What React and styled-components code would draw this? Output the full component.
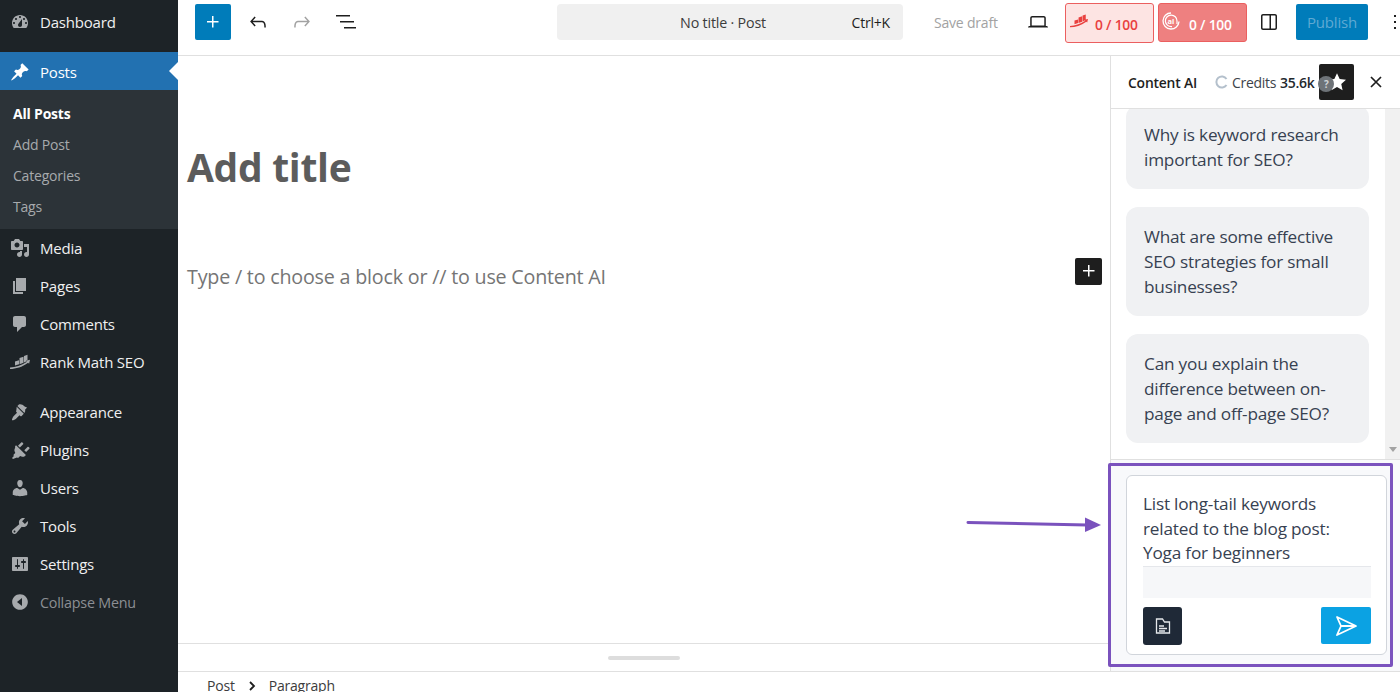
import React from 'react';
import styled, { createGlobalStyle } from 'styled-components';

const GlobalStyle = createGlobalStyle`
	html, body {
		margin: 0;
		padding: 0;
		height: 100%;
		overflow: hidden;
		background: #fff;
	}
	* {
		box-sizing: border-box;
	}
	body {
		font-family: 'Open Sans', 'Noto Sans', sans-serif;
		color: #1e1e1e;
	}
`;

const Page = styled.div`
	display: flex;
	height: 692px;
	width: 1400px;
	position: relative;
	overflow: hidden;
`;

// ######### admin sidebar
const Sidebar = styled.nav`
	width: 178px;
	flex-shrink: 0;
	background: #1d2327;
	padding-top: 3px;
	display: flex;
	flex-direction: column;
`;

const MenuItem = styled.div`
	height: 38px;
	display: flex;
	align-items: center;
	gap: 10px;
	padding-left: 10px;
	font-size: ${(p) => (p.$muted ? 14.3 : 15)}px;
	letter-spacing: -0.2px;
	position: relative;
	flex-shrink: 0;
	color: ${(p) => (p.$muted ? '#8c8f94' : '#f0f0f1')};
	background: ${(p) => (p.$active ? '#2271b1' : 'transparent')};
	margin-top: ${(p) => p.$gap || 0}px;
	padding-top: ${(p) => (p.$active ? 1 : 0)}px;
	svg {
		width: 20px;
		height: 20px;
		flex-shrink: 0;
		fill: ${(p) => (p.$active ? '#fff' : '#a7aaad')};
	}
	${(p) =>
		p.$active &&
		`
		color: #fff;
		&::after {
			content: '';
			position: absolute;
			right: 0;
			top: 10px;
			border: 9px solid transparent;
			border-right-color: #fff;
			border-left-width: 0;
		}
	`}
`;

const SubMenu = styled.div`
	background: #2c3338;
	padding: 8px 0 7px;
	height: 139px;
	flex-shrink: 0;
`;

const SubItem = styled.div`
	height: 31px;
	display: flex;
	align-items: center;
	padding-left: 13px;
	font-size: 14px;
	letter-spacing: -0.2px;
	font-weight: ${(p) => (p.$current ? 700 : 400)};
	color: ${(p) => (p.$current ? '#fff' : '#a7aaad')};
`;

// ######### editor
const Main = styled.div`
	flex: 1;
	min-width: 0;
	display: flex;
	flex-direction: column;
`;

const TopBar = styled.header`
	height: 56px;
	flex-shrink: 0;
	border-bottom: 1px solid #e0e0e0;
	display: flex;
	align-items: center;
	padding: 0 0 11px 17px;
`;

const InserterButton = styled.button`
	width: 36px;
	height: 36px;
	flex-shrink: 0;
	border: 0;
	border-radius: 2px;
	background: #007cba;
	display: flex;
	align-items: center;
	justify-content: center;
	padding: 0;
	svg {
		fill: #fff;
	}
`;

const ToolIcon = styled.span`
	display: flex;
	align-items: center;
	justify-content: center;
	width: 24px;
	height: 24px;
	margin-left: ${(p) => p.$left || 0}px;
	flex-shrink: 0;
	svg {
		fill: ${(p) => (p.$disabled ? '#a2a2a2' : '#1e1e1e')};
	}
`;

const CommandCenter = styled.div`
	width: 346px;
	height: 36px;
	margin-left: 198px;
	background: #f0f0f0;
	border-radius: 4px;
	display: flex;
	align-items: center;
	position: relative;
	padding-right: 13px;
	justify-content: flex-end;
	font-size: 14px;
	letter-spacing: -0.2px;
	flex-shrink: 0;
`;

const CommandTitle = styled.span`
	position: absolute;
	left: 0;
	right: 14px;
	text-align: center;
	font-size: 14.3px;
	color: #3c3c3c;
`;

const Shortcut = styled.span`
	position: relative;
`;

const SaveDraft = styled.span`
	margin-left: 31px;
	font-size: 14px;
	letter-spacing: -0.2px;
	color: #a2a2a2;
	white-space: nowrap;
	width: 64px;
	flex-shrink: 0;
`;

const ScoreBadge = styled.div`
	width: 89px;
	height: ${(p) => (p.$strong ? 39 : 40)}px;
	margin: 1px 0 0 ${(p) => p.$left}px;
	border-radius: 3px;
	border: 1px solid #eb5f5f;
	background: ${(p) => (p.$strong ? '#ee8080' : '#fde4e3')};
	color: ${(p) => (p.$strong ? '#fff' : '#e9403f')};
	display: flex;
	align-items: center;
	padding-left: ${(p) => (p.$strong ? 3 : 4)}px;
	gap: ${(p) => (p.$strong ? 9 : 7)}px;
	font-size: 13.8px;
	font-weight: 600;
	flex-shrink: 0;
	svg {
		flex-shrink: 0;
		margin-top: -3px;
	}
`;

const ScoreText = styled.span`
	margin-top: 3px;
	letter-spacing: -0.2px;
`;

const PublishButton = styled.button`
	width: 72px;
	height: 36px;
	margin-left: 15px;
	border: 0;
	padding: 0;
	border-radius: 2px;
	background: #007cba;
	color: #5fa9d3;
	font-family: inherit;
	font-size: 15px;
	letter-spacing: -0.2px;
	flex-shrink: 0;
`;

const Workspace = styled.div`
	flex: 1;
	min-height: 0;
	display: flex;
`;

const EditorColumn = styled.div`
	flex: 1;
	min-width: 0;
	display: flex;
	flex-direction: column;
`;

const Canvas = styled.div`
	flex: 1;
	padding: 85px 8px 0 9px;
	border-bottom: 1px solid #e0e0e0;
`;

const TitleField = styled.h1`
	margin: 0;
	font-size: 39px;
	line-height: 52px;
	font-weight: 700;
	letter-spacing: -0.3px;
	color: #5c5c5c;
`;

const BlockRow = styled.div`
	margin-top: 70px;
	height: 28px;
	display: flex;
	align-items: center;
	justify-content: space-between;
`;

const Placeholder = styled.span`
	font-size: 19.7px;
	letter-spacing: -0.2px;
	line-height: 24px;
	margin-top: -1px;
	color: #757575;
`;

const BlockAdd = styled.span`
	width: 27px;
	height: 27px;
	margin-top: -12px;
	border-radius: 2px;
	background: #1e1e1e;
	display: flex;
	align-items: center;
	justify-content: center;
	svg {
		fill: #fff;
	}
`;

const ResizeBar = styled.div`
	height: 27px;
	flex-shrink: 0;
	display: flex;
	align-items: center;
	justify-content: center;
`;

const ResizeHandle = styled.span`
	width: 72px;
	height: 4px;
	border-radius: 2px;
	background: #ddd;
`;

const Breadcrumb = styled.footer`
	height: 21px;
	flex-shrink: 0;
	border-top: 1px solid #e0e0e0;
	display: flex;
	align-items: center;
	gap: 11px;
	padding: 7px 0 0 29px;
	font-size: 14px;
	letter-spacing: -0.2px;
	color: #3c3c3c;
	line-height: 14px;
`;

// ######### content ai panel
const Panel = styled.aside`
	width: 290px;
	flex-shrink: 0;
	border-left: 1px solid #e0e0e0;
	display: flex;
	flex-direction: column;
`;

const PanelHeader = styled.div`
	height: 53px;
	flex-shrink: 0;
	border-bottom: 1px solid #e0e0e0;
	display: flex;
	align-items: center;
	padding-left: 17px;
`;

const PanelTitle = styled.span`
	font-size: 13.9px;
	font-weight: 600;
	letter-spacing: -0.2px;
	width: 87px;
	white-space: nowrap;
`;

const Credits = styled.span`
	display: flex;
	align-items: center;
	gap: 3px;
	font-size: 14px;
	letter-spacing: -0.3px;
	white-space: nowrap;
	color: #3c434a;
	b {
		font-weight: 600;
		color: #23282d;
		margin-left: 1px;
	}
`;

const StarButton = styled.span`
	width: 35px;
	height: 36px;
	margin-left: 5px;
	background: #1e1e1e;
	border-radius: 2px;
	display: flex;
	align-items: center;
	justify-content: center;
	position: relative;
	flex-shrink: 0;
`;

const HelpDot = styled.span`
	position: absolute;
	left: -1px;
	top: 12px;
	width: 16px;
	height: 16px;
	border-radius: 50%;
	background: #6e7378;
	color: #cfd2d6;
	font-size: 10px;
	font-weight: 700;
	display: flex;
	align-items: center;
	justify-content: center;
`;

const CloseIcon = styled.span`
	margin-left: 15px;
	display: flex;
`;

const Messages = styled.div`
	flex: 1;
	min-height: 0;
	overflow: hidden;
	display: flex;
	border-bottom: 1px solid #e0e0e0;
`;

const MessageList = styled.div`
	flex: 1;
	padding: 0 16px 0 15px;
	margin-top: -4px;
	display: flex;
	flex-direction: column;
	gap: 17.75px;
`;

const Bubble = styled.div`
	background: #f0f1f3;
	border-radius: 12px;
	padding: 17px 18px;
	font-size: 17.2px;
	line-height: 25px;
	letter-spacing: -0.2px;
	color: #374151;
`;

const ScrollTrack = styled.div`
	width: 15px;
	background: #f1f1f1;
	display: flex;
	align-items: flex-end;
	justify-content: center;
	padding-bottom: 7px;
	&::after {
		content: '';
		border: 4px solid transparent;
		border-top: 5px solid #a3a3a3;
		border-bottom-width: 0;
	}
`;

const Composer = styled.div`
	height: 211px;
	flex-shrink: 0;
	background: #f8f9fb;
	padding: 15px 13px 16px 15px;
`;

const ComposerCard = styled.div`
	height: 180px;
	background: #fff;
	border: 1px solid #d1d5db;
	border-radius: 6px;
	padding: 16px 15px 0 16px;
	display: flex;
	flex-direction: column;
`;

const PromptText = styled.div`
	font-size: 17.2px;
	line-height: 24.6px;
	letter-spacing: -0.2px;
	color: #374151;
	height: 74px;
`;

const PromptStrip = styled.div`
	height: 32px;
	background: #f6f7f9;
	border-top: 1px solid #e5e7eb;
`;

const ComposerActions = styled.div`
	margin-top: 9px;
	display: flex;
	justify-content: space-between;
	align-items: flex-start;
`;

const DocButton = styled.span`
	width: 39px;
	height: 38px;
	border-radius: 3px;
	background: #1f2937;
	display: flex;
	align-items: center;
	justify-content: center;
`;

const SendButton = styled.span`
	width: 50px;
	height: 37px;
	border-radius: 2px;
	background: #0ba2e3;
	display: flex;
	align-items: center;
	justify-content: center;
`;

// the purple marks lie over the screenshot
const HighlightBox = styled.div`
	position: absolute;
	left: 1108px;
	top: 463px;
	width: 285px;
	height: 204px;
	border: 3px solid #7a52bd;
	border-radius: 2px;
	pointer-events: none;
`;

const ArrowMark = styled.svg`
	position: absolute;
	left: 965px;
	top: 512px;
`;

const Icon = ({ d, size = 20, box = 20 }) => (
	<svg width={size} height={size} viewBox={`0 0 ${box} ${box}`} fillRule="evenodd">
		<path d={d} />
	</svg>
);

const icons = {
	dashboard:
		'M3.76 16h12.48c1.1-1.37 1.76-3.11 1.76-5 0-4.42-3.58-8-8-8s-8 3.58-8 8c0 1.89.66 3.63 1.76 5zM10 4c.55 0 1 .45 1 1s-.45 1-1 1-1-.45-1-1 .45-1 1-1zM6 6c.55 0 1 .45 1 1s-.45 1-1 1-1-.45-1-1 .45-1 1-1zm8 0c.55 0 1 .45 1 1s-.45 1-1 1-1-.45-1-1 .45-1 1-1zm-5.37 5.55L12 7v6c0 1.1-.9 2-2 2s-2-.9-2-2c0-.57.24-1.08.63-1.45zM4 10c.55 0 1 .45 1 1s-.45 1-1 1-1-.45-1-1 .45-1 1-1zm12 0c.55 0 1 .45 1 1s-.45 1-1 1-1-.45-1-1 .45-1 1-1z',
	post: 'M10.44 3.02l1.82-1.82 6.36 6.35-1.83 1.82c-1.05-.68-2.48-.57-3.41.36l-.75.75c-.92.93-1.04 2.35-.35 3.41l-1.83 1.82-2.41-2.41-2.8 2.79c-.42.42-3.38 2.71-3.8 2.29s1.86-3.39 2.28-3.81l2.79-2.79L4.1 9.36l1.83-1.82c1.05.69 2.48.57 3.4-.36l.75-.75c.93-.92 1.05-2.35.36-3.41z',
	media:
		'M13 11V4c0-.55-.45-1-1-1h-1.67L9 1H5L3.67 3H2c-.55 0-1 .45-1 1v7c0 .55.45 1 1 1h10c.55 0 1-.45 1-1zM7 4.5c1.38 0 2.5 1.12 2.5 2.5S8.38 9.5 7 9.5 4.5 8.38 4.5 7 5.62 4.5 7 4.5zM14 6h5v10.5c0 1.38-1.12 2.5-2.5 2.5S14 17.88 14 16.5s1.12-2.5 2.5-2.5c.17 0 .34.02.5.05V9h-3V6zm-4 8.05V13h2v3.5c0 1.38-1.12 2.5-2.5 2.5S7 17.88 7 16.5 8.12 14 9.5 14c.17 0 .34.02.5.05z',
	pages: 'M6 15V2h10v13H6zm-1 1h8v2H3V5h2v11z',
	comments: 'M5 2h9c1.1 0 2 .9 2 2v7c0 1.1-.9 2-2 2h-2l-5 5v-5H5c-1.1 0-2-.9-2-2V4c0-1.1.9-2 2-2z',
	rankmath:
		'M5 9.500l4-1.300v4l-4 1.300zM9.500 6l4-1.300v6l-4 1.500zM14 4l3.500-1.200v6l-3.500 1.800zM0 15.500c5.500-.3 11-1.800 17-5.700l-1-1.100 4-.9-.9 4-1-1.100c-6 4.500-12 6-18.100 6.300z',
	appearance:
		'M14.48 11.06L7.41 3.99l1.5-1.5c.5-.56 2.3-.47 3.51.32 1.21.8 1.43 1.28 2.66 2.01 1.22.73 2.08.66 2.08.66l-1.69 1.7c-.4.4-.6 1.17-.1 1.68zM6.7 4.7l7.07 7.07-2.12 2.12c-.39.39-1.02.39-1.41 0l-.71-.71-3.5 3.5c-.5.5-3.5 2-4 1.5s1-3.5 1.5-4l3.5-3.5-.71-.71c-.39-.39-.39-1.02 0-1.41z',
	plugins:
		'M13.11 4.36L9.87 7.6 8 5.73l3.24-3.24c.35-.34 1.05-.2 1.56.32.52.51.66 1.21.31 1.55zm-8 1.77l.91-.91 9.88 9.88-.91.91c-.88.88-2.4 1.1-3.5.6l-1.4-.6-1.4 1.4c-.5.5-1.3.5-1.8 0L3 19l-1-1 1.900-1.900c-.5-.5-.5-1.300 0-1.800l1.400-1.400-.6-1.400c-.5-1.100-.28-2.620.41-3.570zM17.500 6.900l-3.240 3.240 1.870 1.870 3.240-3.240c.34-.35.2-1.050-.32-1.560-.51-.52-1.210-.66-1.550-.31z',
	users:
		'M10 9.25c-2.27 0-2.73-3.44-2.73-3.44C7 4.02 7.82 2 9.97 2c2.16 0 2.98 2.02 2.71 3.81 0 0-.41 3.44-2.68 3.44zm0 2.57L12.72 10c2.39 0 4.52 2.33 4.52 4.53v2.49s-3.65 1.13-7.24 1.13c-3.65 0-7.24-1.13-7.24-1.13v-2.49c0-2.25 1.94-4.48 4.47-4.48z',
	tools:
		'M16.68 9.77c-1.34 1.34-3.3 1.67-4.95.99l-5.41 6.52c-.99.99-2.59.99-3.58 0s-.99-2.59 0-3.57l6.52-5.42c-.68-1.65-.35-3.61.99-4.95 1.28-1.28 3.12-1.62 4.72-1.06l-2.89 2.89 2.82 2.82 2.86-2.87c.53 1.58.18 3.4-1.08 4.65zM3.81 16.21c.4.39 1.03.39 1.42 0 .4-.4.4-1.03 0-1.43-.39-.39-1.02-.39-1.42 0-.39.4-.39 1.03 0 1.43z',
	settings:
		'M18 16V4c0-.55-.45-1-1-1H3c-.55 0-1 .45-1 1v12c0 .55.45 1 1 1h14c.55 0 1-.45 1-1zM8 11h1c.55 0 1 .45 1 1s-.45 1-1 1H8v1.5c0 .28-.22.5-.5.5s-.5-.22-.5-.5V13H6c-.55 0-1-.45-1-1s.45-1 1-1h1V5.500c0-.28.22-.5.5-.5s.5.22.5.5V11zm5-2h-1c-.55 0-1-.45-1-1s.45-1 1-1h1V5.500c0-.28.22-.5.5-.5s.5.22.5.5V7h1c.55 0 1 .45 1 1s-.45 1-1 1h-1v5.500c0 .28-.22.5-.5.5s-.5-.22-.5-.5V9z',
	collapse: 'M10 2.16c4.33 0 7.84 3.51 7.84 7.84s-3.51 7.84-7.84 7.84S2.16 14.33 2.16 10 5.67 2.16 10 2.16zM12 14V6l-5 4z',
	plus: 'M11 12.500V17.500H12.500V12.500H17.500V11H12.500V6H11V11H6V12.500H11Z',
	undo: 'M18.3 11.7c-.6-.6-1.4-.9-2.3-.9H6.700l3-3.300-1.100-1-4.500 5 4.500 5 1.100-1-3-3.300H16c.5 0 .9.200 1.300.500 1 1 1 3.400 1 4.500v.3h1.500v-.2c0-1.500 0-4.300-1.500-5.600z',
	redo: 'M5.700 11.700c.6-.6 1.400-.9 2.300-.9h9.300l-3-3.300 1.100-1 4.500 5-4.500 5-1.100-1 3-3.300H8c-.5 0-.9.200-1.300.500-1 1-1 3.400-1 4.500v.3H4.200v-.2c0-1.500 0-4.300 1.500-5.600z',
	listView: 'M1 5h14v1.600H1V5zm4 6h14v1.600H5V11zm4 6h12v1.600H9V17z',
	laptop: 'M20.500 16h-.7V8c0-1.100-.9-2-2-2H6.200c-1.100 0-2 .9-2 2v8h-.7c-.8 0-1.500.7-1.500 1.500h20c0-.8-.7-1.500-1.500-1.500zM5.700 8c0-.3.2-.5.5-.5h11.600c.3 0 .5.200.5.500v7.600H5.700V8z',
	sidebar:
		'M18 4H6c-1.100 0-2 .9-2 2v12c0 1.100.9 2 2 2h12c1.100 0 2-.9 2-2V6c0-1.100-.9-2-2-2zM6 5.500h6.500v13H6c-.3 0-.5-.2-.5-.5V6c0-.3.2-.5.5-.5zm12.500 12.500c0 .3-.2.500-.5.500h-4v-13h4c.3 0 .5.200.5.500v12z',
	dots: 'M13 19h-2v-2h2v2zm0-6h-2v-2h2v2zm0-6h-2V5h2v2z',
};

const menuTop = [
	['media', 'Media'],
	['pages', 'Pages'],
	['comments', 'Comments'],
	['rankmath', 'Rank Math SEO'],
];

const menuBottom = [
	['plugins', 'Plugins'],
	['users', 'Users'],
	['tools', 'Tools'],
	['settings', 'Settings'],
];

const AiLogo = () => (
	<svg width="18" height="18" viewBox="0 0 18 18" fill="none" stroke="#fff">
		<path d="M9 1a8 8 0 1 0 8 8.500" strokeWidth="1.300" />
		<path d="M10 14.600a5.800 5.800 0 1 1 5-5.600v3" strokeWidth="1.200" />
		<text x="9" y="11.500" textAnchor="middle" fontSize="7.500" fontWeight="700" fill="#fff" stroke="none" fontFamily="Open Sans">
			ai
		</text>
	</svg>
);

export default function App() {
	return (
		<Page>
			<GlobalStyle />
			<Sidebar>
				<MenuItem>
					<Icon d={icons.dashboard} />
					Dashboard
				</MenuItem>
				<MenuItem $active $gap={11}>
					<Icon d={icons.post} />
					Posts
				</MenuItem>
				<SubMenu>
					<SubItem $current>All Posts</SubItem>
					<SubItem>Add Post</SubItem>
					<SubItem>Categories</SubItem>
					<SubItem>Tags</SubItem>
				</SubMenu>
				{menuTop.map(([icon, label]) => (
					<MenuItem key={label}>
						<Icon d={icons[icon]} />
						{label}
					</MenuItem>
				))}
				<MenuItem $gap={12}>
					<Icon d={icons.appearance} />
					Appearance
				</MenuItem>
				{menuBottom.map(([icon, label]) => (
					<MenuItem key={label}>
						<Icon d={icons[icon]} />
						{label}
					</MenuItem>
				))}
				<MenuItem $muted>
					<Icon d={icons.collapse} />
					Collapse Menu
				</MenuItem>
			</Sidebar>

			<Main>
				<TopBar>
					<InserterButton aria-label="Add block">
						<Icon d={icons.plus} size={24} box={24} />
					</InserterButton>
					<ToolIcon $left={15}>
						<Icon d={icons.undo} size={24} box={24} />
					</ToolIcon>
					<ToolIcon $left={20} $disabled>
						<Icon d={icons.redo} size={24} box={24} />
					</ToolIcon>
					<ToolIcon $left={21}>
						<Icon d={icons.listView} size={24} box={24} />
					</ToolIcon>
					<CommandCenter>
						<CommandTitle>No title · Post</CommandTitle>
						<Shortcut>Ctrl+K</Shortcut>
					</CommandCenter>
					<SaveDraft>Save draft</SaveDraft>
					<ToolIcon $left={28}>
						<Icon d={icons.laptop} size={24} box={24} />
					</ToolIcon>
					<ScoreBadge $left={15}>
						<svg width="18" height="18" viewBox="0 0 20 20" fill="#e9403f">
							<path d={icons.rankmath} />
						</svg>
						<ScoreText>0 / 100</ScoreText>
					</ScoreBadge>
					<ScoreBadge $left={4} $strong>
						<AiLogo />
						<ScoreText>0 / 100</ScoreText>
					</ScoreBadge>
					<ToolIcon $left={10}>
						<Icon d={icons.sidebar} size={24} box={24} />
					</ToolIcon>
					<PublishButton>Publish</PublishButton>
					<ToolIcon $left={15}>
						<Icon d={icons.dots} size={24} box={24} />
					</ToolIcon>
				</TopBar>

				<Workspace>
					<EditorColumn>
						<Canvas>
							<TitleField>Add title</TitleField>
							<BlockRow>
								<Placeholder>Type / to choose a block or // to use Content AI</Placeholder>
								<BlockAdd>
									<Icon d={icons.plus} size={24} box={24} />
								</BlockAdd>
							</BlockRow>
						</Canvas>
						<ResizeBar>
							<ResizeHandle />
						</ResizeBar>
					</EditorColumn>

					<Panel>
						<PanelHeader>
							<PanelTitle>Content AI</PanelTitle>
							<Credits>
								<svg width="14" height="14" viewBox="0 0 14 14" fill="none" stroke="#b4c0cc" strokeWidth="2">
									<path d="M11.500 4A5.500 5.500 0 1 0 11.500 10" />
								</svg>
								Credits <b>35.6k</b>
							</Credits>
							<StarButton>
								<svg width="20" height="20" viewBox="0 0 24 24" fill="#fff">
									<path d="M12 1.500l3.200 7 7.600.8-5.700 5.100 1.600 7.500L12 18l-6.700 3.900 1.600-7.500L1.200 9.300l7.600-.8z" />
								</svg>
								<HelpDot>?</HelpDot>
							</StarButton>
							<CloseIcon>
								<svg width="14" height="14" viewBox="0 0 14 14" stroke="#1e1e1e" strokeWidth="1.700">
									<path d="M2 2l10 10M12 2L2 12" />
								</svg>
							</CloseIcon>
						</PanelHeader>
						<Messages>
							<MessageList>
								<Bubble>Why is keyword research important for SEO?</Bubble>
								<Bubble>What are some effective SEO strategies for small businesses?</Bubble>
								<Bubble>Can you explain the difference between on-page and off-page SEO?</Bubble>
							</MessageList>
							<ScrollTrack />
						</Messages>
						<Composer>
							<ComposerCard>
								<PromptText>
									List long-tail keywords
									<br />
									related to the blog post:
									<br />
									Yoga for beginners
								</PromptText>
								<PromptStrip />
								<ComposerActions>
									<DocButton>
										<svg width="18" height="18" viewBox="0 0 18 18" fill="none" stroke="#e5e7eb" strokeWidth="1.300">
											<path d="M2.500 2h6l2 3h5v11h-13zM5 9h5M5 11.500h8M5 14h6" />
										</svg>
									</DocButton>
									<SendButton>
										<svg width="24" height="24" viewBox="0 0 24 24" fill="none" stroke="#fff" strokeWidth="1.800" strokeLinejoin="round">
											<path d="M3 3l19 9-19 9 4-9zM7 12h15" />
										</svg>
									</SendButton>
								</ComposerActions>
							</ComposerCard>
						</Composer>
					</Panel>
				</Workspace>

				<Breadcrumb>
					<span>Post</span>
					<svg width="12" height="12" viewBox="0 0 12 12" fill="none" stroke="#1e1e1e" strokeWidth="1.800">
						<path d="M4 2l4 4-4 4" />
					</svg>
					<span>Paragraph</span>
				</Breadcrumb>
			</Main>

			<HighlightBox />
			<ArrowMark width="140" height="24" viewBox="0 0 140 24">
				<path d="M3 10.500L122 13" stroke="#7a52bd" strokeWidth="3" strokeLinecap="round" fill="none" />
				<path d="M120 5.500l16 7.500-16 7z" fill="#7a52bd" />
			</ArrowMark>
		</Page>
	);
}
